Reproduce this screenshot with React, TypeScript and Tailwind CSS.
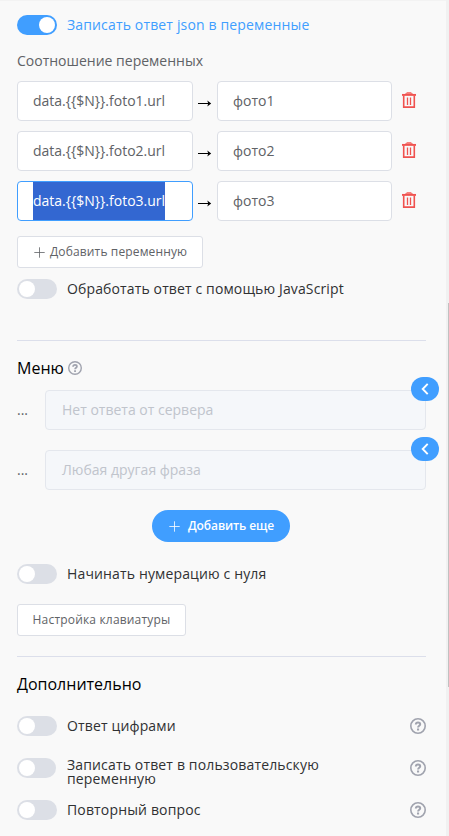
import React from "react";

function Switch({ on = false, narrow = false }: { on?: boolean; narrow?: boolean }) {
  return (
    <span
      role="switch"
      aria-checked={on}
      className={`flex h-5 shrink-0 items-center rounded-full px-[2px] ${narrow ? "mr-px w-[39px]" : "w-10"} ${
        on ? "justify-end bg-[#409eff]" : "justify-start bg-[#dcdfe6]"
      }`}
    >
      <span className="h-4 w-4 rounded-full bg-white" />
    </span>
  );
}

function Trash() {
  return (
    <svg width="14" height="16" viewBox="0 0 14 16" fill="none" stroke="#f0524f" aria-hidden="true">
      <path d="M3.5 2.2 4.8.7h4.4l1.3 1.5z" fill="#f58d8b" stroke="#f36f6c" strokeWidth="1" />
      <path d="M0 2.9h14" strokeWidth="1.9" />
      <path d="M1.7 3.5v11.6h10.6V3.5" strokeWidth="1.6" />
      <path d="M5.5 5.5v7.5M8.5 5.5v7.5" strokeWidth="1.3" />
    </svg>
  );
}

function Help({ size = 16 }: { size?: number }) {
  return (
    <svg width={size} height={size} viewBox="0 0 16 16" fill="none" stroke="#a0a3ae" className="shrink-0" aria-hidden="true">
      <circle cx="8" cy="8" r="7.2" strokeWidth="1.6" />
      <path d="M5.8 6.5C5.9 5 6.8 4.4 8 4.4c1.3 0 2.2.7 2.2 1.8 0 1.5-2.1 1.5-2.1 3.2" strokeWidth="2" />
      <path d="M7 11.5h2.1" strokeWidth="2" />
    </svg>
  );
}

function Plus() {
  return (
    <svg width="11" height="11" viewBox="0 0 11 11" fill="none" stroke="currentColor" strokeWidth="0.8" className="shrink-0" aria-hidden="true">
      <path d="M.3 5.5h10.4M5.5.3v10.4" />
    </svg>
  );
}

function Variable({ n, selected = false }: { n: number; selected?: boolean }) {
  return (
    <div className="flex h-10 items-center">
      <div className={`flex h-10 w-[176px] items-center rounded border bg-white px-[15px] ${selected ? "border-[#409eff]" : "border-[#dcdfe6]"}`}>
        <span className={selected ? "flex h-[38px] items-center bg-[#3367d1] text-white" : ""}>{`data.{{$N}}.foto${n}.url`}</span>
      </div>
      <svg width="14" height="8" viewBox="0 0 14 8" className="ml-[5px] mt-1" aria-hidden="true">
        <path d="M0 4.5h11" stroke="#000" strokeWidth="1" />
        <path d="m9.3 1.5 3.9 3-3.9 3 .9-3z" fill="#000" />
      </svg>
      <div className="ml-[5px] flex h-10 w-[175px] items-center rounded border border-[#dcdfe6] bg-white px-[15px]">фото{n}</div>
      <span className="mb-[2px] ml-[10px]"><Trash /></span>
    </div>
  );
}

function MenuItem({ text }: { text: string }) {
  return (
    <div className="flex h-10 items-center">
      <span className="w-7 text-[#606266]">...</span>
      <div className="relative flex h-10 flex-1 items-center rounded border border-[#e4e7ed] bg-[#f5f7fa] px-4 text-[#c0c4cc]">
        {text}
        <button className="absolute -right-[14px] -top-[14px] flex h-6 w-7 items-center justify-center rounded-full bg-[#409eff]">
          <svg width="8" height="12" viewBox="0 0 8 12" fill="none" stroke="#fff" strokeWidth="1.9" aria-hidden="true">
            <path d="M6.7 .8 1.7 6l5 5.2" />
          </svg>
        </button>
      </div>
    </div>
  );
}

function Option({ children, narrow = false }: { children: React.ReactNode; narrow?: boolean }) {
  return (
    <div className="flex h-5 items-center">
      <Switch narrow={narrow} />
      <span className={`ml-[10px] flex-1 pr-10 leading-[14px] tracking-[0.15px] ${narrow ? "pt-2" : ""}`}>{children}</span>
      <Help />
    </div>
  );
}

export default function App() {
  return (
    <div className="flex h-[836px] w-[449px] overflow-hidden bg-[#f9f9f9] font-['Open_Sans','Noto_Sans',sans-serif] text-sm leading-5 text-[#303133]">
      <main className="flex w-[446px] flex-col border-t border-[#f3f3f3] pl-[17px] pr-5 pt-[14px]">
        <div className="flex h-5 items-center gap-[10px] text-[#409eff]">
          <Switch on />
          <span className="tracking-[0.15px]">Записать ответ json в переменные</span>
        </div>
        <div className="mt-4 text-[#606266]">Соотношение переменных</div>
        <div className="mt-[10px] flex flex-col gap-[10px] text-[#606266]">
          <Variable n={1} />
          <Variable n={2} />
          <Variable n={3} selected />
        </div>
        <button className="mt-[15px] flex h-8 w-[186px] items-center gap-[5px] rounded-[3px] border border-[#dcdfe6] bg-white pl-4 text-xs tracking-[0.14px] text-[#606266]">
          <Plus />Добавить переменную
        </button>
        <div className="mt-[11px] flex h-5 items-center gap-[10px]">
          <Switch />
          <span className="tracking-[0.13px]">Обработать ответ с помощью JavaScript</span>
        </div>
        <hr className="mt-[41px] border-[#dcdfeb]" />
        <div className="mt-[15px] flex h-6 items-center gap-1 text-base text-black">
          <h2>Меню</h2>
          <Help size={14} />
        </div>
        <div className="mt-[10px] flex flex-col gap-5">
          <MenuItem text="Нет ответа от сервера" />
          <MenuItem text="Любая другая фраза" />
        </div>
        <button className="ml-[135px] mt-5 flex h-8 w-[138px] items-center gap-2 rounded-full bg-[#409eff] pl-[17px] text-xs font-semibold tracking-[-0.1px] text-white">
          <Plus />Добавить еще
        </button>
        <div className="mt-[22px] flex h-5 items-center gap-[10px]">
          <Switch />
          <span className="tracking-[0.14px]">Начинать нумерацию с нуля</span>
        </div>
        <button className="mt-5 h-8 w-[169px] rounded-[3px] border border-[#dcdfe6] bg-white text-xs tracking-[0.18px] text-[#606266]">Настройка клавиатуры</button>
        <hr className="mt-5 border-[#dcdfeb]" />
        <h2 className="mt-[15px] text-base leading-6 text-black">Дополнительно</h2>
        <div className="mt-5 flex flex-col gap-[22px]">
          <Option>Ответ цифрами</Option>
          <Option narrow>Записать ответ в пользовательскую переменную</Option>
          <Option>Повторный вопрос</Option>
        </div>
      </main>
      <aside className="flex w-[3px] justify-end bg-[#f1f1f1]">
        <div className="mt-[303px] h-[384px] w-px bg-[#c1c1c1]" />
      </aside>
    </div>
  );
}
